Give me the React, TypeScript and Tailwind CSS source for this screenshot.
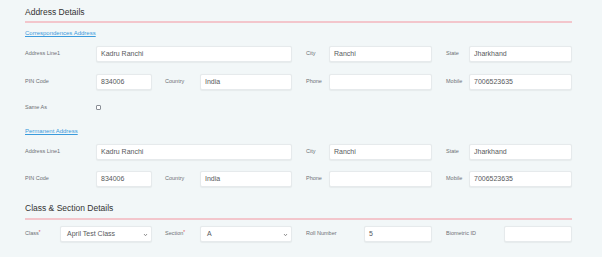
import React from "react";

const font = { fontFamily: '"Liberation Sans", Arial, sans-serif' };

function Label({ text, w, req }: { text: string; w: string; req?: boolean }) {
  return (
    <div className={`${w} shrink-0 self-start mt-[3px] text-[5.5px] leading-[8px] text-[#6e7075]`}>
      {text}
      {req && <span className="text-[#e0474c] align-top text-[4.5px]">*</span>}
    </div>
  );
}

function Input({ value, w }: { value?: string; w: string }) {
  return (
    <div
      className={`${w} h-4 shrink-0 bg-white border border-[#e6eaec] rounded-[2px] shadow-[0_0.5px_1px_rgba(0,0,0,0.05)] pl-[4px] flex items-center text-[7px] text-[#57595c]`}
    >
      {value}
    </div>
  );
}

function Select({ value, w }: { value: string; w: string }) {
  return (
    <div
      className={`${w} h-4 shrink-0 bg-white border border-[#e6eaec] rounded-[2px] shadow-[0_0.5px_1px_rgba(0,0,0,0.05)] pl-[6px] pr-[3px] flex items-center justify-between text-[7px] text-[#57595c]`}
    >
      <span>{value}</span>
      <svg width="5" height="4" viewBox="0 0 10 8" className="mt-[1px]">
        <path d="M2 2 L5 5.5 L8 2" fill="none" stroke="#777" strokeWidth="1.6" />
      </svg>
    </div>
  );
}

function LinkText({ text }: { text: string }) {
  return <div className="text-[6px] leading-[8px] text-[#3b9bdc] underline">{text}</div>;
}

function AddressRows() {
  return (
    <div className="flex">
      <Label text="Address Line1" w="w-[71px]" />
      <Input value="Kadru Ranchi" w="w-[196px]" />
      <div className="w-[14px]" />
      <Label text="City" w="w-[23px]" />
      <Input value="Ranchi" w="w-[103px]" />
      <div className="w-[14px]" />
      <Label text="State" w="w-[23px]" />
      <Input value="Jharkhand" w="w-[103px]" />
    </div>
  );
}

function SecondRow() {
  return (
    <div className="flex">
      <Label text="PIN Code" w="w-[71px]" />
      <Input value="834006" w="w-[56px]" />
      <div className="w-[13px]" />
      <Label text="Country" w="w-[35px]" />
      <Input value="India" w="w-[92px]" />
      <div className="w-[14px]" />
      <Label text="Phone" w="w-[23px]" />
      <Input w="w-[103px]" />
      <div className="w-[14px]" />
      <Label text="Mobile" w="w-[23px]" />
      <Input value="7006523635" w="w-[103px]" />
    </div>
  );
}

export default function App() {
  return (
    <div className="w-[602px] h-[257px] overflow-hidden bg-[#f2f7f8] pl-[25px]" style={font}>
      <div className="w-[547px] pt-[5px]">
        <div className="text-[8.5px] leading-[14px] text-[#333] pb-[2px] border-b-2 border-[#f3c6cc]">
          Address Details
        </div>
        <div className="mt-[6px]">
          <LinkText text="Correspondences Address" />
        </div>
        <div className="mt-[9px]">
          <AddressRows />
        </div>
        <div className="mt-[12px]">
          <SecondRow />
        </div>
        <div className="mt-[13px] flex items-center h-[8px]">
          <div className="w-[71px] text-[5.5px] leading-[8px] text-[#6e7075]">Same As</div>
          <div className="w-[5px] h-[5px] border border-[#8a8f96] rounded-[1px] bg-white" />
        </div>
        <div className="mt-[16px]">
          <LinkText text="Permanent Address" />
        </div>
        <div className="mt-[9px]">
          <AddressRows />
        </div>
        <div className="mt-[11px]">
          <SecondRow />
        </div>
        <div className="mt-[14px]">
          <div className="text-[8.5px] leading-[14px] text-[#333] pb-[3px] border-b-2 border-[#f3c6cc]">
            Class &amp; Section Details
          </div>
        </div>
        <div className="mt-[6px] flex">
          <Label text="Class" req w="w-[35px]" />
          <Select value="April Test Class" w="w-[92px]" />
          <div className="w-[13px]" />
          <Label text="Section" req w="w-[35px]" />
          <Select value="A" w="w-[92px]" />
          <div className="w-[14px]" />
          <Label text="Roll Number" w="w-[58px]" />
          <Input value="5" w="w-[68px]" />
          <div className="w-[14px]" />
          <Label text="Biometric ID" w="w-[58px]" />
          <Input w="w-[68px]" />
        </div>
      </div>
    </div>
  );
}
